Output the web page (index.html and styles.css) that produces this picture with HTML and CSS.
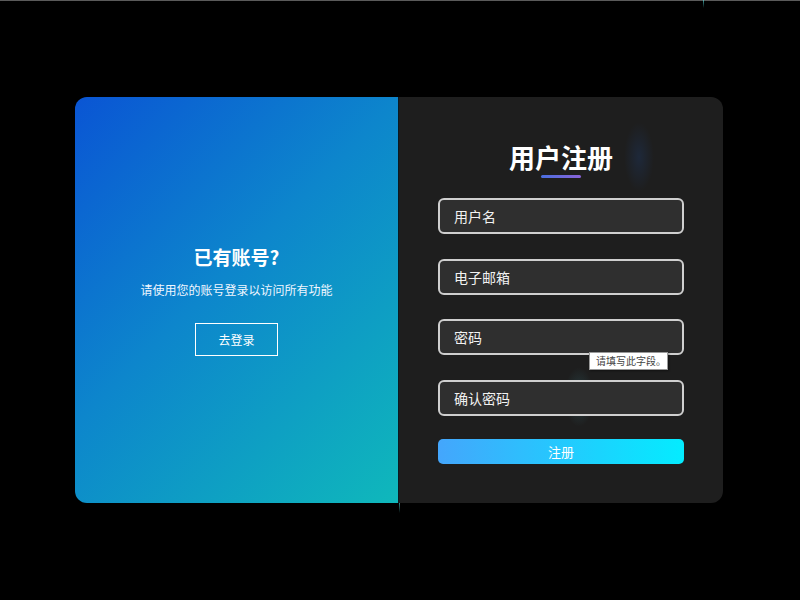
FILE: index.html
```html
<!DOCTYPE html>
<html lang="zh">
<head>
<meta charset="utf-8">
<title>用户注册</title>
<link rel="stylesheet" href="styles.css">
</head>
<body>
<div class="topline"></div>
<span class="spark spark-top"></span>
<main class="stage">
  <div class="card">
    <section class="panel-left">
      <h2 class="left-title">已有账号?</h2>
      <p class="left-sub">请使用您的账号登录以访问所有功能</p>
      <button class="btn-ghost" type="button">去登录</button>
    </section>
    <section class="panel-right">
      <span class="glow glow-a"></span>
      <span class="glow glow-b"></span>
      <h1 class="title">用户注册</h1>
      <div class="underline"></div>
      <form class="form">
        <div class="field"><input class="input" type="text" placeholder="用户名"></div>
        <div class="field"><input class="input" type="email" placeholder="电子邮箱"></div>
        <div class="field">
          <input class="input" type="password" placeholder="密码">
          <div class="tooltip">请填写此字段。</div>
        </div>
        <div class="field"><input class="input" type="password" placeholder="确认密码"></div>
        <button class="btn-submit" type="button">注册</button>
      </form>
    </section>
    <span class="spark spark-bottom"></span>
  </div>
</main>
</body>
</html>
```
FILE: styles.css
```css
* { box-sizing: border-box; }
html, body {
  margin: 0;
  padding: 0;
  background: #000;
  width: 800px;
  height: 600px;
  overflow: hidden;
  font-family: "Noto Sans CJK SC", "Noto Sans", sans-serif;
}
.topline {
  height: 1px;
  background: #5a5a5a;
}
.stage {
  height: 599px;
  display: flex;
  align-items: center;
  justify-content: center;
  padding-right: 2px;
  padding-bottom: 1px;
}
.card {
  position: relative;
  width: 648px;
  height: 406px;
  display: flex;
  border-radius: 12px;
}
.panel-left {
  width: 324px;
  border-radius: 12px 0 0 12px;
  background: linear-gradient(135deg, #0a55d4 0%, #0d86cc 45%, #0fb8bb 100%);
  display: flex;
  flex-direction: column;
  align-items: center;
  justify-content: center;
  color: #fff;
  border-right: 1px solid #0a1a22;
}
.left-title {
  margin: 0;
  font-size: 19px;
  line-height: 24px;
  font-weight: 700;
}
.left-sub {
  margin: 12px 0 0;
  font-size: 12px;
  line-height: 18px;
  color: #f0f6ff;
}
.btn-ghost {
  margin-top: 24px;
  width: 83px;
  height: 33px;
  background: transparent;
  border: 1.5px solid #fff;
  color: #fff;
  font-family: inherit;
  font-size: 12px;
  padding: 0;
}
.panel-right {
  position: relative;
  width: 324px;
  background: #1e1e1e;
  border-radius: 0 12px 12px 0;
  padding: 44px 39px 0 39px;
  display: flex;
  flex-direction: column;
  align-items: center;
  overflow: hidden;
}
.glow {
  position: absolute;
  border-radius: 50%;
  pointer-events: none;
}
.glow-a {
  left: 225px;
  top: 25px;
  width: 30px;
  height: 70px;
  background: radial-gradient(ellipse at center, rgba(30, 60, 110, 0.35), rgba(30, 60, 110, 0) 70%);
}
.glow-b {
  left: 165px;
  top: 270px;
  width: 30px;
  height: 60px;
  background: radial-gradient(ellipse at center, rgba(60, 120, 130, 0.35), rgba(60, 120, 130, 0) 70%);
}
.title {
  position: relative;
  margin: 0;
  font-size: 26px;
  line-height: 32px;
  font-weight: 700;
  color: #fff;
}
.underline {
  position: relative;
  width: 40px;
  height: 3px;
  margin-top: 2px;
  border-radius: 2px;
  background: linear-gradient(90deg, #4a6fe0, #8a63d8);
}
.form {
  position: relative;
  width: 246px;
  margin-top: 20px;
  display: flex;
  flex-direction: column;
  gap: 24.5px;
}
.field {
  position: relative;
}
.input {
  display: block;
  width: 100%;
  height: 36px;
  border: 2px solid #cfcfcf;
  border-radius: 6px;
  background: #2f2f2f;
  padding: 0 0 0 14px;
  color: #fff;
  font-family: inherit;
  font-size: 14px;
  outline: none;
}
.input::placeholder {
  color: #f2f2f2;
}
.tooltip {
  position: absolute;
  left: 151px;
  top: 33px;
  width: 79px;
  height: 18px;
  background: #fff;
  border: 1px solid #999;
  color: #444;
  font-size: 10px;
  line-height: 16px;
  padding-left: 6px;
  box-shadow: 1px 1px 2px rgba(0, 0, 0, 0.4);
  white-space: nowrap;
}
.btn-submit {
  margin-top: -1.5px;
  height: 25px;
  border: none;
  border-radius: 5px;
  background: linear-gradient(90deg, #44a6fc, #04ecff);
  color: #fff;
  font-family: inherit;
  font-size: 13px;
  padding: 0;
}
.spark {
  position: absolute;
  width: 1px;
  pointer-events: none;
}
.spark-top {
  left: 703px;
  top: 0;
  height: 8px;
  background: linear-gradient(180deg, rgba(80, 200, 200, 0.8), rgba(80, 200, 200, 0));
}
.spark-bottom {
  left: 324px;
  top: 406px;
  height: 10px;
  background: linear-gradient(180deg, rgba(70, 170, 170, 0.8), rgba(70, 170, 170, 0));
}
```
